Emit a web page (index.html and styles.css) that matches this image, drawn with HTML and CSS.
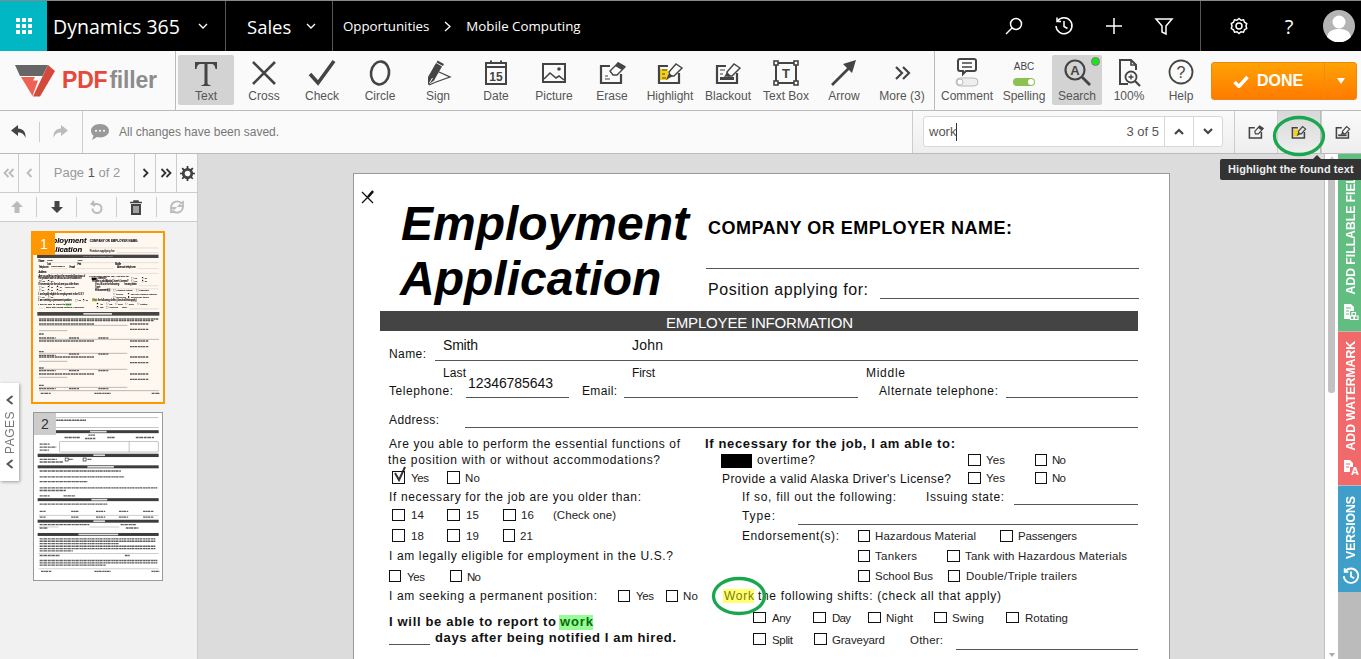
FILE: index.html
```html
<!DOCTYPE html>
<html lang="en">
<head>
  <meta charset="UTF-8" />
  <title>PDFfiller - Employment Application</title>
  <link rel="stylesheet" href="styles.css">
</head>
<body>

  <header class="topbar">
    <div class="waffle">
      <svg width="16" height="16" viewBox="0 0 16 16" fill="#fff">
        <rect x="0" y="0" width="4" height="4"/><rect x="6" y="0" width="4" height="4"/><rect x="12" y="0" width="4" height="4"/>
        <rect x="0" y="6" width="4" height="4"/><rect x="6" y="6" width="4" height="4"/><rect x="12" y="6" width="4" height="4"/>
        <rect x="0" y="12" width="4" height="4"/><rect x="6" y="12" width="4" height="4"/><rect x="12" y="12" width="4" height="4"/>
      </svg>
    </div>
    <div class="app-name">
      <span>Dynamics 365</span>
      <svg class="chev" width="10" height="6" viewBox="0 0 10 6"><path d="M1 1l4 4 4-4" /></svg>
    </div>
    <div class="module-name">
      <span>Sales</span>
      <svg class="chev" width="10" height="6" viewBox="0 0 10 6"><path d="M1 1l4 4 4-4" /></svg>
    </div>
    <nav class="crumbs">
      <span>Opportunities</span>
      <svg class="chev" width="7" height="11" viewBox="0 0 7 11"><path d="M1 1l5 4.5-5 4.5" /></svg>
      <span>Mobile Computing</span>
    </nav>
    <div class="top-actions">
      <svg width="20" height="20" viewBox="0 0 20 20" class="line"><circle cx="12" cy="8" r="5.5"/><path d="M8 12l-6 6"/></svg>
      <svg width="20" height="20" viewBox="0 0 20 20" class="line"><path d="M3.5 5A8 8 0 1 1 2 10"/><path d="M3 1.500V5.500h4"/><path d="M10 5v5.500l3.500 2"/></svg>
      <svg width="20" height="20" viewBox="0 0 20 20" class="line"><path d="M10 2v16M2 10h16"/></svg>
      <svg width="20" height="20" viewBox="0 0 20 20" class="line"><path d="M2 3h16l-6 7v8l-4-2v-6z"/></svg>
    </div>
    <div class="top-user">
      <svg width="18" height="18" viewBox="0 0 18 18" class="line"><circle cx="9" cy="9" r="3"/><path d="M9 1.500l2 1.700 2.500-.4 1 2.400 2.200 1.300-.7 2.500.7 2.500-2.200 1.300-1 2.400-2.500-.4-2 1.700-2-1.700-2.500.4-1-2.400-2.200-1.300.7-2.500-.7-2.500 2.200-1.300 1-2.400 2.500.4z"/></svg>
      <span class="help-mark">?</span>
      <svg class="avatar" width="32" height="32" viewBox="0 0 32 32"><circle cx="16" cy="16" r="16" fill="#b4b4b4"/><circle cx="16" cy="12" r="6.500" fill="#fff"/><path d="M4 27c1-6 6-8 12-8s11 2 12 8a16 16 0 0 1-24 0z" fill="#fff"/></svg>
    </div>
  </header>

  <section class="toolbar">
    <div class="logo">
      <svg width="42" height="32" viewBox="0 0 42 32">
        <path d="M0 0h33l-5.500 11H5z" fill="#666"/>
        <path d="M33 0l7 6-15 25.500h-7z" fill="#d24a3b"/>
        <path d="M6 12h14l-2 3.500 5 0-5.500 15.500z" fill="#ef6155"/>
      </svg>
      <span class="logo-pdf">PDF</span><span class="logo-filler">filler</span>
    </div>

    <div class="tools">
      <div class="tool active">
        <svg width="30" height="30" viewBox="0 0 30 30"><path d="M4 4h22v7h-1.500c-.3-3-1.500-5-4-5h-4v19c0 1.500 1 2 3 2v1h-9v-1c2 0 3-.5 3-2V6h-4c-2.500 0-3.700 2-4 5H4z" fill="#444"/></svg>
        <span>Text</span>
      </div>
      <div class="tool">
        <svg width="30" height="30" viewBox="0 0 30 30" class="ico"><path d="M4 4l22 22M26 4L4 26" stroke-width="2.600"/></svg>
        <span>Cross</span>
      </div>
      <div class="tool">
        <svg width="30" height="30" viewBox="0 0 30 30" class="ico"><path d="M3 16l8 9L27 3" stroke-width="3.600"/></svg>
        <span>Check</span>
      </div>
      <div class="tool">
        <svg width="30" height="30" viewBox="0 0 30 30" class="ico"><ellipse cx="15" cy="15" rx="9" ry="11.500" stroke-width="2.600" transform="rotate(8 15 15)"/></svg>
        <span>Circle</span>
      </div>
      <div class="tool">
        <svg width="30" height="30" viewBox="0 0 30 30" class="ico"><path d="M13 5l6 3.500-8 14-6 4.500 0-8z" fill="#444" stroke="none"/><path d="M14.500 2.500l6.500 3.500-1 2-6.500-3.500z" fill="#444" stroke="none"/><path d="M6.500 25l3-5" stroke="#fff" stroke-width="1"/><path d="M16 14l11 5-14 5-7 3" stroke-width="1.300"/></svg>
        <span>Sign</span>
      </div>
      <div class="tool">
        <svg width="30" height="30" viewBox="0 0 30 30" class="ico"><rect x="5" y="5" width="20" height="21" stroke-width="2"/><path d="M5 9h20M10 2.500V6M20 2.500V6" stroke-width="2"/><text x="15" y="23" class="glyph-date">15</text></svg>
        <span>Date</span>
      </div>
      <div class="tool">
        <svg width="30" height="30" viewBox="0 0 30 30" class="ico"><rect x="4" y="6" width="22" height="18" stroke-width="2"/><path d="M5 21l6-6 6 5 3-2 5 4" stroke-width="1.600"/><circle cx="20" cy="11" r="1.800" fill="#444" stroke="none"/></svg>
        <span>Picture</span>
      </div>
      <div class="tool">
        <svg width="30" height="30" viewBox="0 0 30 30" class="ico"><path d="M24 16v9H4V8h9" stroke-width="2.200"/><path d="M8 18h3M8 21h5" stroke-width="1.200"/><path d="M13 13l8-8 7 4-8 8h-4z" stroke-width="1.400"/><path d="M18 8l3-4 7 4-3 4z" fill="#444" stroke="none"/></svg>
        <span>Erase</span>
      </div>
      <div class="tool">
        <svg width="30" height="30" viewBox="0 0 30 30" class="ico"><rect x="5" y="11" width="8" height="11" fill="#f8d117" stroke="none"/><path d="M24 15v10H4V8h9" stroke-width="2.200"/><path d="M7 12h5M7 16h3M7 20h4" stroke-width="1.200"/><path d="M14 14l7-8 6 4-8 8h-4z" stroke-width="1.400"/><path d="M11 22l3-7 4 3z" fill="#444" stroke="none"/></svg>
        <span>Highlight</span>
      </div>
      <div class="tool">
        <svg width="30" height="30" viewBox="0 0 30 30" class="ico"><path d="M24 15v10H4V8h9" stroke-width="2.200"/><path d="M7 12h5M7 16h3" stroke-width="1.200"/><path d="M14 14l7-8 6 4-8 8h-4z" stroke-width="1.400"/><path d="M11 19l3-5 4 4z" fill="#444" stroke="none"/><rect x="7" y="19" width="14" height="3" fill="#444" stroke="none"/></svg>
        <span>Blackout</span>
      </div>
      <div class="tool">
        <svg width="30" height="30" viewBox="0 0 30 30" class="ico"><rect x="5" y="5" width="20" height="20" stroke-width="2"/><rect x="3" y="3" width="4" height="4" fill="#fff" stroke-width="1.600"/><rect x="23" y="3" width="4" height="4" fill="#fff" stroke-width="1.600"/><rect x="3" y="23" width="4" height="4" fill="#fff" stroke-width="1.600"/><rect x="23" y="23" width="4" height="4" fill="#fff" stroke-width="1.600"/><text x="15" y="20" class="glyph-box">T</text></svg>
        <span>Text Box</span>
      </div>
      <div class="tool">
        <svg width="30" height="30" viewBox="0 0 30 30" class="ico"><path d="M3 27L22 8" stroke-width="2.600"/><path d="M27 2l-13 4 9 9z" fill="#444" stroke="none"/></svg>
        <span>Arrow</span>
      </div>
      <div class="tool">
        <svg width="30" height="30" viewBox="0 0 30 30" class="ico"><path d="M9 9l6 6-6 6M16 9l6 6-6 6" stroke-width="2.200"/></svg>
        <span>More (3)</span>
      </div>
    </div>

    <div class="tools tools-right">
      <div class="tool">
        <svg width="30" height="30" viewBox="0 0 30 30">
          <path d="M8 1h14a2 2 0 0 1 2 2v8a2 2 0 0 1-2 2h-8l-3 3v-3H8a2 2 0 0 1-2-2V3a2 2 0 0 1 2-2z" fill="none" stroke="#444" stroke-width="2"/>
          <path d="M10 5h10M10 9h10" stroke="#444" stroke-width="1.500"/>
          <rect x="4" y="20" width="22" height="8" rx="4" fill="#eee" stroke="#bbb"/><circle cx="8" cy="24" r="3" fill="#fff" stroke="#bbb"/>
        </svg>
        <span>Comment</span>
      </div>
      <div class="tool">
        <svg width="30" height="30" viewBox="0 0 30 30">
          <text x="15" y="12" class="glyph-abc">ABC</text>
          <rect x="4" y="20" width="22" height="8" rx="4" fill="#8cc152"/><circle cx="22" cy="24" r="3" fill="#fff"/>
        </svg>
        <span>Spelling</span>
      </div>
      <div class="tool active tool-search">
        <svg width="30" height="30" viewBox="0 0 30 30" class="ico"><circle cx="13" cy="12" r="9.500" stroke-width="2.200"/><path d="M20 19l8 8" stroke-width="2.800"/><text x="13" y="17" class="glyph-a">A</text></svg>
        <span>Search</span>
        <i class="status-dot"></i>
      </div>
      <div class="tool">
        <svg width="30" height="30" viewBox="0 0 30 30" class="ico"><path d="M14 26H6V2h11l5 5v5" stroke-width="2"/><path d="M17 2v5h5" stroke-width="1.600"/><circle cx="17" cy="19" r="5.500" stroke-width="1.800"/><path d="M21 23l5 5" stroke-width="2.200"/><path d="M14.500 19h5M17 16.500v5" stroke-width="1.400"/></svg>
        <span>100%</span>
      </div>
      <div class="tool">
        <svg width="30" height="30" viewBox="0 0 30 30" class="ico"><circle cx="15" cy="14" r="11.500" stroke-width="1.800"/><text x="15" y="20" class="glyph-help">?</text></svg>
        <span>Help</span>
      </div>
    </div>

    <div class="done-btn">
      <div class="done-main">
        <svg width="16" height="13" viewBox="0 0 16 13"><path d="M1.500 7l4.500 4.500L14.500 2" fill="none" stroke="#fff" stroke-width="3.400"/></svg>
        <span>DONE</span>
      </div>
      <div class="done-caret"><i></i></div>
    </div>
  </section>

  <section class="subbar">
    <div class="history">
      <svg width="18" height="14" viewBox="0 0 18 14"><path d="M8 0L1 5.500 8 11V7.500c4 0 6 1.500 7.500 5.500C16 7 13 3.500 8 3.500z" fill="#444"/></svg>
      <i class="tiny-sep"></i>
      <svg width="18" height="14" viewBox="0 0 18 14"><path d="M10 0l7 5.500L10 11V7.500c-4 0-6 1.500-7.500 5.500C2 7 5 3.500 10 3.500z" fill="#bbb"/></svg>
    </div>
    <div class="saved">
      <svg width="20" height="18" viewBox="0 0 20 18"><path d="M10 1c5 0 9 2.900 9 6.700s-4 6.700-9 6.700c-1 0-2-.1-3-.4L2 17l1.500-4.300C2 11.500 1 9.700 1 7.700 1 3.900 5 1 10 1z" fill="#999"/><circle cx="6" cy="7.700" r="1" fill="#fff"/><circle cx="10" cy="7.700" r="1" fill="#fff"/><circle cx="14" cy="7.700" r="1" fill="#fff"/></svg>
      <span>All changes have been saved.</span>
    </div>
    <div class="find">
      <div class="find-box">
        <div class="find-input"><span class="find-term">work</span><span class="find-count">3 of 5</span></div>
        <div class="find-step"><svg width="10" height="7" viewBox="0 0 10 7"><path d="M1 6l4-4 4 4" /></svg></div>
        <div class="find-step"><svg width="10" height="7" viewBox="0 0 10 7"><path d="M1 1l4 4 4-4" /></svg></div>
      </div>
    </div>
    <div class="find-actions">
      <div class="find-action">
        <svg width="18" height="18" viewBox="0 0 30 30" class="ico"><path d="M24 15v10H4V8h9" stroke-width="2.600"/><path d="M13 14l8-9 6 4-8 9h-5z" stroke-width="2"/><path d="M18 8l3-3 6 4-3 3z" fill="#444" stroke="none"/></svg>
      </div>
      <div class="find-action on">
        <svg width="18" height="18" viewBox="0 0 30 30" class="ico"><rect x="6" y="11" width="9" height="11" fill="#f8d117" stroke="none"/><path d="M24 15v10H4V8h9" stroke-width="2.600"/><path d="M14 14l7-8 5 4-7 8h-4z" stroke-width="2"/><path d="M11 22l3-7 4 3z" fill="#444" stroke="none"/></svg>
      </div>
      <div class="find-action">
        <svg width="18" height="18" viewBox="0 0 30 30" class="ico"><path d="M24 15v10H4V8h9" stroke-width="2.600"/><path d="M14 14l7-8 5 4-7 8h-4z" stroke-width="2"/><path d="M11 19l3-5 4 4z" fill="#444" stroke="none"/><rect x="7" y="19" width="14" height="3" fill="#444" stroke="none"/></svg>
      </div>
    </div>
  </section>

  <main class="workspace">
    <aside class="sidebar">
      <div class="pager">
        <div class="pager-cell off"><svg width="12" height="10" viewBox="0 0 12 10"><path d="M5.500 1l-4 4 4 4M10.500 1l-4 4 4 4"/></svg></div>
        <div class="pager-cell off"><svg width="7" height="10" viewBox="0 0 7 10"><path d="M5.500 1l-4 4 4 4"/></svg></div>
        <div class="pager-cell page-label">Page <b>1</b> of 2</div>
        <div class="pager-cell"><svg width="7" height="10" viewBox="0 0 7 10"><path d="M1.500 1l4 4-4 4"/></svg></div>
        <div class="pager-cell"><svg width="12" height="10" viewBox="0 0 12 10"><path d="M1.500 1l4 4-4 4M6.500 1l4 4-4 4"/></svg></div>
        <div class="pager-cell"><svg width="15" height="15" viewBox="0 0 16 16"><circle cx="8" cy="8" r="4.500" fill="none" stroke="#444" stroke-width="3"/><path d="M8 0v16M0 8h16M2.300 2.300l11.400 11.400M13.700 2.300L2.300 13.700" stroke="#444" stroke-width="2.400" stroke-dasharray="3 10 3"/></svg></div>
      </div>
      <div class="page-tools">
        <svg width="14" height="14" viewBox="0 0 14 14"><path d="M7 1l6 6H9.500v6h-5V7H1z" fill="#bbb"/></svg>
        <i class="tiny-sep"></i>
        <svg width="14" height="14" viewBox="0 0 14 14"><path d="M7 13l6-6H9.500V1h-5v6H1z" fill="#444"/></svg>
        <i class="tiny-sep"></i>
        <svg width="14" height="14" viewBox="0 0 14 14"><path d="M4 1L1.500 4 5 6M2 4h5a4.500 4.500 0 1 1-4.500 4.500" fill="none" stroke="#bbb" stroke-width="2"/></svg>
        <i class="tiny-sep"></i>
        <svg width="14" height="15" viewBox="0 0 14 15"><path d="M1 2.500h12M5 2.500V1h4v1.500" stroke="#444" stroke-width="1.500" fill="none"/><path d="M2 4h10v11H2z" fill="#444"/><path d="M5 6v7M7 6v7M9 6v7" stroke="#fff"/></svg>
        <i class="tiny-sep"></i>
        <svg width="16" height="14" viewBox="0 0 16 14"><path d="M2 7a6 6 0 0 1 10-4l2-1v4h-4l1.500-1.500M14 7a6 6 0 0 1-10 4l-2 1V8h4l-1.500 1.500" fill="none" stroke="#bbb" stroke-width="1.800"/></svg>
      </div>
      <div class="thumbs">
        <div class="thumb current">
          <svg width="130" height="169" viewBox="99 249 390 507">
            <use href="#form" transform="translate(99 249) scale(.48) translate(-354 -175)"/>
            <rect x="112" y="486" width="366" height="11" fill="#444"/>
            <rect x="250" y="489" width="86" height="5" fill="#ddd"/>
            <g class="rows">
              <path d="M117 507h360M117 512h345"/>
              <path d="M117 522h165M390 522h55" />
              <path d="M117 552h15M117 564h50M207 564h30M295 564h30M390 538h55"/>
              <path d="M117 573h165M390 573h55"/>
              <path d="M117 605h15M117 616h50M207 612h30M295 612h30M390 590h55"/>
              <path d="M117 621h165M390 621h55"/>
              <path d="M117 654h15M117 662h50M207 662h30M295 662h30M390 638h55"/>
              <path d="M117 672h165M390 672h55"/>
              <path d="M117 706h15M117 716h50M207 716h30M295 716h30M390 688h55"/>
              <path d="M122 730h30M283 730h50M455 730h25"/>
            </g>
            <path d="M117 526h265M117 542h85M117 568h360M117 610h265M117 634h85M117 658h265M117 682h85M117 712h265M117 722h360" stroke="#777" stroke-width="1.500"/>
          </svg>
          <span class="thumb-no">1</span>
        </div>
        <div class="thumb">
          <svg width="128" height="167" viewBox="101 39 386 502">
            <path d="M160 52h316M115 82h362M180 124h295M180 156h295M178 124v32M388 124v32M476 124v32" stroke="#888" stroke-width="1.500"/>
            <g fill="#3d3d3d">
              <rect x="112" y="90" width="365" height="9"/><rect x="112" y="161" width="365" height="10"/><rect x="112" y="196" width="365" height="9"/>
              <rect x="112" y="295" width="365" height="9"/><rect x="112" y="360" width="365" height="9"/><rect x="112" y="400" width="365" height="9"/>
            </g>
            <g fill="#ddd">
              <rect x="270" y="92" width="50" height="5"/><rect x="280" y="163" width="35" height="5"/><rect x="262" y="198" width="80" height="5"/>
              <rect x="274" y="297" width="48" height="5"/><rect x="280" y="362" width="35" height="5"/><rect x="235" y="402" width="120" height="5"/>
            </g>
            <g class="rows">
              <path d="M168 60h90M193 112h47M265 105h20M255 115h32M322 112h24M408 112h56"/>
              <path d="M118 132h30M118 141h50M118 150h28"/>
              <path d="M118 178h52M118 186h70M205 178h14M262 178h12"/>
              <path d="M118 213h245M118 231h255M118 245h145M118 264h355M118 272h80M118 288h30M190 288h35"/>
              <path d="M118 313h205M118 335h18M213 335h22M288 335h28M357 335h28M430 335h32M118 352h18M213 352h22M288 352h28M357 352h28M430 352h32"/>
              <path d="M118 375h150M362 375h48M118 385h25M378 385h38"/>
              <path d="M118 418h350M118 425h350M118 432h240M118 440h350M118 447h350M118 454h100"/>
              <path d="M118 468h60M375 468h15M118 483h355M118 490h355M118 497h200M122 516h32M283 516h50M455 516h25"/>
            </g>
            <path d="M115 347h362M115 382h60M268 382h90M115 462h362M115 508h362" stroke="#999" stroke-width="1.500"/>
            <rect x="195" y="174" width="9" height="9" fill="none" stroke="#222" stroke-width="2"/>
            <rect x="249" y="174" width="9" height="9" fill="none" stroke="#222" stroke-width="2"/>
          </svg>
          <span class="thumb-no">2</span>
        </div>
      </div>
    </aside>

    <div class="pages-tab">
      <svg width="8" height="10" viewBox="0 0 8 10"><path d="M6.500 1l-5 4 5 4"/></svg>
      <span>PAGES</span>
      <svg width="8" height="10" viewBox="0 0 8 10"><path d="M6.500 1l-5 4 5 4"/></svg>
    </div>

    <div class="viewer">
      <div class="sheet">
        <svg class="form-svg" width="815" height="485" viewBox="354 174 815 485">
          <g id="form">
            <path d="M362 192l11 11M373 192l-11 11" stroke="#111" stroke-width="1.300" fill="none"/>
            <path d="M368 197l5-6" stroke="#111" stroke-width="2.500"/>

            <text x="401" y="240" class="title">Employment</text>
            <text x="400" y="295" class="title">Application</text>
            <text x="708" y="234" class="company" textLength="304">COMPANY OR EMPLOYER NAME:</text>
            <path class="rule" d="M706 268.500h433M880 298.500h259M435 360.500h703M466 397.500h103M624 397.500h234M1006 397.500h132M465 427.500h673M1014 504.500h124M798 524.500h340M956 649.500h182M389 644.500h41"/>
            <text x="708" y="295" class="position" textLength="160">Position applying for:</text>

            <rect x="380" y="311" width="758" height="20" fill="#444"/>
            <text x="666" y="328" class="band" textLength="187">EMPLOYEE INFORMATION</text>

            <text x="389" y="358" textLength="37">Name:</text>
            <text x="443" y="350" class="fill" textLength="35">Smith</text>
            <text x="632" y="350" class="fill" textLength="31">John</text>
            <text x="443" y="377" textLength="23">Last</text>
            <text x="632" y="377" textLength="23">First</text>
            <text x="866" y="377" textLength="39">Middle</text>
            <text x="389" y="395" textLength="64">Telephone:</text>
            <text x="468" y="388" class="fill" textLength="85">12346785643</text>
            <text x="582" y="395" textLength="35">Email:</text>
            <text x="879" y="395" textLength="119">Alternate telephone:</text>
            <text x="389" y="424" textLength="50">Address:</text>

            <text x="389" y="448" textLength="291">Are you able to perform the essential functions of</text>
            <text x="388" y="464" textLength="272">the position with or without accommodations?</text>
            <text x="411" y="482" class="opt" textLength="18">Yes</text>
            <text x="465" y="482" class="opt" textLength="15">No</text>
            <path d="M395 473l4 7 6-13" stroke="#333" stroke-width="2" fill="none"/>
            <text x="389" y="501" textLength="252">If necessary for the job are you older than:</text>
            <text x="411" y="519" class="opt">14</text><text x="466" y="519" class="opt">15</text><text x="521" y="519" class="opt">16</text>
            <text x="553" y="519" class="opt" textLength="63">(Check one)</text>
            <text x="411" y="540" class="opt">18</text><text x="466" y="540" class="opt">19</text><text x="520" y="540" class="opt">21</text>
            <text x="389" y="560" textLength="284">I am legally eligible for employment in the U.S.?</text>
            <text x="407" y="581" class="opt" textLength="18">Yes</text>
            <text x="467" y="581" class="opt" textLength="14">No</text>
            <text x="389" y="600" textLength="208">I am seeking a permanent position:</text>
            <text x="636" y="600" class="opt" textLength="18">Yes</text>
            <text x="683" y="600" class="opt" textLength="15">No</text>

            <rect x="723" y="589" width="31" height="14" fill="#ffff70"/>
            <text x="724" y="600" class="found" textLength="30">Work</text>
            <text x="758" y="600" textLength="243">the following shifts: (check all that apply)</text>

            <text x="389" y="626" class="strong" textLength="167">I will be able to report to</text>
            <rect x="559" y="615" width="34" height="15" fill="#97fb97"/>
            <text x="560" y="626" class="strong hit" textLength="33">work</text>
            <text x="435" y="642" class="strong" textLength="241">days after being notified I am hired.</text>

            <text x="705" y="448" class="strong" textLength="250">If necessary for the job, I am able to:</text>
            <rect x="721" y="454" width="31" height="14" fill="#000"/>
            <text x="757" y="464" textLength="58">overtime?</text>
            <text x="986" y="464" class="opt" textLength="19">Yes</text>
            <text x="1052" y="464" class="opt" textLength="14">No</text>
            <text x="722" y="483" textLength="229">Provide a valid Alaska Driver's License?</text>
            <text x="986" y="482" class="opt" textLength="19">Yes</text>
            <text x="1052" y="482" class="opt" textLength="14">No</text>
            <text x="742" y="501" textLength="154">If so, fill out the following:</text>
            <text x="926" y="501" textLength="78">Issuing state:</text>
            <text x="742" y="520" textLength="33">Type:</text>
            <text x="742" y="540" textLength="97">Endorsement(s):</text>
            <text x="875" y="540" class="opt" textLength="101">Hazardous Material</text>
            <text x="1018" y="540" class="opt" textLength="59">Passengers</text>
            <text x="875" y="560" class="opt" textLength="42">Tankers</text>
            <text x="965" y="560" class="opt" textLength="162">Tank with Hazardous Materials</text>
            <text x="875" y="580" class="opt" textLength="58">School Bus</text>
            <text x="966" y="580" class="opt" textLength="111">Double/Triple trailers</text>
            <text x="772" y="622" class="opt" textLength="19">Any</text>
            <text x="832" y="622" class="opt" textLength="19">Day</text>
            <text x="886" y="622" class="opt" textLength="27">Night</text>
            <text x="952" y="622" class="opt" textLength="32">Swing</text>
            <text x="1025" y="622" class="opt" textLength="43">Rotating</text>
            <text x="772" y="644" class="opt" textLength="21">Split</text>
            <text x="832" y="644" class="opt" textLength="53">Graveyard</text>
            <text x="910" y="644" class="opt" textLength="33">Other:</text>

            <g class="boxes">
              <rect x="392.500" y="471.500" width="12" height="12"/><rect x="447.500" y="471.500" width="12" height="12"/>
              <rect x="392.500" y="509.500" width="12" height="11"/><rect x="447.500" y="509.500" width="12" height="11"/><rect x="503.500" y="509.500" width="12" height="11"/>
              <rect x="392.500" y="529.500" width="12" height="12"/><rect x="447.500" y="529.500" width="12" height="12"/><rect x="503.500" y="529.500" width="11" height="12"/>
              <rect x="389.500" y="570.500" width="11" height="11"/><rect x="450.500" y="570.500" width="11" height="11"/>
              <rect x="618.500" y="590.500" width="11" height="11"/><rect x="666.500" y="590.500" width="11" height="11"/>
              <rect x="968.500" y="454.500" width="12" height="11"/><rect x="1035.500" y="454.500" width="11" height="11"/>
              <rect x="968.500" y="472.500" width="12" height="11"/><rect x="1035.500" y="472.500" width="11" height="11"/>
              <rect x="858.500" y="530.500" width="11" height="11"/><rect x="1000.500" y="530.500" width="12" height="11"/>
              <rect x="858.500" y="550.500" width="11" height="11"/><rect x="947.500" y="550.500" width="12" height="11"/>
              <rect x="858.500" y="570.500" width="11" height="11"/><rect x="948.500" y="570.500" width="11" height="11"/>
              <rect x="753.500" y="612.500" width="12" height="10"/><rect x="813.500" y="612.500" width="12" height="10"/><rect x="868.500" y="612.500" width="12" height="10"/><rect x="934.500" y="612.500" width="12" height="10"/><rect x="1006.500" y="612.500" width="12" height="10"/>
              <rect x="753.500" y="633.500" width="12" height="11"/><rect x="814.500" y="633.500" width="12" height="11"/>
            </g>
          </g>
        </svg>
      </div>
    </div>

    <div class="scrollbar">
      <div class="scroll-up"></div>
      <div class="scroll-thumb"></div>
      <div class="scroll-down"></div>
    </div>

    <div class="side-tabs">
      <div class="side-tab tab-fields">
        <span>ADD FILLABLE FIELDS</span>
        <svg width="16" height="18" viewBox="0 0 16 18" class="tab-ico"><path d="M1 1h7l3 3v4H7v8H1z" fill="#fff"/><path d="M3 5h5M3 8h3M3 11h3" stroke="#62bd80"/><path d="M9 9.500h3.500v3H9zM7.500 13H11v3.500H7.500zM11.500 13H15v3.500h-3.500z" fill="none" stroke="#fff" stroke-width="1.200"/></svg>
      </div>
      <div class="side-tab tab-watermark">
        <span>ADD WATERMARK</span>
        <svg width="16" height="16" viewBox="0 0 16 16" class="tab-ico"><path d="M1 1h6l3 3v4H7v5H1z" fill="#fff"/><path d="M3 5h4M3 8h3" stroke="#f1696b"/><text x="8" y="15.500" class="glyph-tab">A</text></svg>
      </div>
      <div class="side-tab tab-versions">
        <span>VERSIONS</span>
        <svg width="18" height="18" viewBox="0 0 20 20" class="tab-ico"><path d="M3.500 5A8 8 0 1 1 2 10" fill="none" stroke="#fff" stroke-width="2"/><path d="M3 1.500V5.500h4" fill="none" stroke="#fff" stroke-width="2"/><path d="M10 5v5.500l3.500 2" fill="none" stroke="#fff" stroke-width="2"/></svg>
      </div>
    </div>
  </main>

  <div class="tooltip">Highlight the found text</div>

  <svg class="marks" width="1361" height="659" viewBox="0 0 1361 659">
    <ellipse cx="1299" cy="136" rx="24.500" ry="18.500"/>
    <ellipse cx="739" cy="596" rx="25.500" ry="17.500"/>
  </svg>

</body>
</html>
```

FILE: styles.css
```css
html, body {
  margin: 0;
  padding: 0;
  height: 100%;
  overflow: hidden;
}

body {
  font-family: "Liberation Sans", Arial, sans-serif;
  color: #444;
  background: #dcdcdc;
  position: relative;
}

/* top black bar */
.topbar {
  display: flex;
  height: 50px;
  background: #000;
  border-top: 1px solid #888;
  color: #fff;
  font-family: "Open Sans", sans-serif;
}

.waffle {
  width: 47px;
  background: #00b7c3;
  display: flex;
  align-items: center;
  justify-content: center;
}

.app-name, .module-name {
  display: flex;
  align-items: center;
  border-left: 1px solid #000;
  box-sizing: border-box;
  border-right: 1px solid #555;
}

.app-name {
  width: 179px;
  padding-left: 5px;
  gap: 18px;
  font-size: 19.500px;
}

.module-name {
  width: 107px;
  padding-left: 20px;
  gap: 15px;
  font-size: 18.500px;
}

.chev path {
  fill: none;
  stroke: #fff;
  stroke-width: 1.300;
}

.crumbs {
  display: flex;
  align-items: center;
  gap: 15px;
  padding-left: 10px;
  font-size: 13.300px;
}

.top-actions {
  margin-left: auto;
  width: 170px;
  display: flex;
  align-items: center;
  justify-content: space-between;
  padding-right: 26px;
}

.top-user {
  width: 161px;
  flex: none;
  box-sizing: border-box;
  border-left: 1px solid #555;
  display: flex;
  align-items: center;
  padding-left: 29px;
}

.line {
  fill: none;
  stroke: #fff;
  stroke-width: 1.500;
  flex: none;
}

.help-mark {
  font-size: 20px;
  width: 20px;
  margin-left: 31px;
  text-align: center;
}

.avatar {
  margin-left: 24px;
  flex: none;
}

/* tool ribbon */
.toolbar {
  display: flex;
  height: 59px;
  background: #fafafa;
  border-bottom: 1px solid #bbb;
}

.logo {
  width: 176px;
  flex: none;
  box-sizing: border-box;
  display: flex;
  align-items: center;
  padding-left: 15px;
  border-right: 1px solid #bbb;
  font-weight: bold;
  font-size: 23px;
  letter-spacing: -0.2px;
}

.logo svg {
  margin-right: 5px;
}

.logo-pdf {
  color: #e5493a;
  margin-right: 2px;
}

.logo-filler {
  color: #8c8c8c;
}

.tools {
  display: flex;
  flex: none;
  padding-left: 1px;
  width: 759px;
  box-sizing: border-box;
  border-right: 1px solid #bbb;
}

.tools-right {
  width: 276px;
  padding-left: 0;
  border-right: none;
}

.tool {
  width: 56px;
  height: 50px;
  margin: 4px 1px 0;
  border-radius: 2px;
  display: flex;
  flex-direction: column;
  align-items: center;
  font-size: 12px;
  color: #555;
  position: relative;
  padding-top: 3px;
  box-sizing: border-box;
  flex: none;
}

.tool span {
  white-space: nowrap;
  margin-top: 1px;
}

.tools-right .tool {
  margin: 4px 0 0;
}

.tools-right .tool:nth-child(1) { width: 64px; }
.tools-right .tool:nth-child(2) { width: 50px; }
.tools-right .tool:nth-child(3) { width: 50px; margin-left: 3px; }
.tools-right .tool:nth-child(4) { width: 54px; }
.tools-right .tool:nth-child(5) { width: 50px; }

.tool.active {
  background: #d3d3d3;
}

.tool > svg {
  flex: none;
}

.ico {
  fill: none;
  stroke: #444;
}

.status-dot {
  position: absolute;
  top: 2px;
  right: 2px;
  width: 7px;
  height: 7px;
  border-radius: 50%;
  background: #1be41b;
  border: 1px solid #7a7a7a;
}

.glyph-date, .glyph-box, .glyph-a, .glyph-help, .glyph-abc {
  font-weight: bold;
  fill: #444;
  stroke: none;
  text-anchor: middle;
}

.glyph-date { font-size: 12px; }
.glyph-box { font-size: 13px; }
.glyph-a { font-size: 13px; }
.glyph-help { font-size: 16px; font-weight: normal; }
.glyph-abc { font-size: 10px; font-weight: normal; }

.done-btn {
  width: 146px;
  height: 38px;
  margin-top: 11px;
  flex: none;
  display: flex;
  border-radius: 3px;
  background: linear-gradient(#ffa203, #ff7a00);
  color: #fff;
  border: 1px solid #e88a10;
  box-sizing: border-box;
}

.done-main {
  flex: 1;
  display: flex;
  align-items: center;
  justify-content: center;
  gap: 8px;
  font-weight: bold;
  font-size: 16px;
  border-right: 1px solid #ee8b12;
}

.done-caret {
  width: 31px;
  display: flex;
  align-items: center;
  justify-content: center;
}

.done-caret i {
  border-left: 4px solid transparent;
  border-right: 4px solid transparent;
  border-top: 6px solid #fff;
}

/* second row */
.subbar {
  display: flex;
  height: 42px;
  background: #fafafa;
  border-bottom: 1px solid #bbb;
}

.history {
  width: 83px;
  flex: none;
  box-sizing: border-box;
  border-right: 1px solid #ccc;
  display: flex;
  align-items: center;
  justify-content: space-between;
  padding: 0 13px 0 10px;
}

.tiny-sep {
  width: 1px;
  height: 20px;
  background: #ccc;
  display: block;
}

.saved {
  display: flex;
  flex: none;
  align-items: center;
  gap: 9px;
  padding-left: 7px;
  width: 829px;
  box-sizing: border-box;
  font-size: 12px;
  color: #777;
}

.find {
  width: 322px;
  flex: none;
  box-sizing: border-box;
  padding: 5px 11px 5px 10px;
  border-left: 1px solid #ccc;
  background: linear-gradient(#fafafa, #eee);
}

.find-box {
  display: flex;
  height: 31px;
  box-sizing: border-box;
  border: 1px solid #d8d8d8;
  border-radius: 3px;
  background: #fff;
}

.find-input {
  flex: 1;
  display: flex;
  justify-content: space-between;
  align-items: center;
  padding: 0 5px;
  font-size: 13px;
  color: #555;
}

.find-term {
  border-right: 1px solid #333;
  height: 18px;
  line-height: 18px;
}

.find-step {
  width: 28px;
  border-left: 1px solid #d8d8d8;
  display: flex;
  align-items: center;
  justify-content: center;
}

.find-step path {
  fill: none;
  stroke: #444;
  stroke-width: 2.200;
}

.find-actions {
  flex: 1;
  display: flex;
  background: linear-gradient(#fafafa, #eee);
}

.find-action {
  width: 43px;
  flex: none;
  box-sizing: border-box;
  display: flex;
  align-items: center;
  justify-content: center;
  border-left: 1px solid #ccc;
}

.find-action.on {
  width: 44px;
  background: linear-gradient(#d8d8d8, #eee);
  border-right: 1px solid #bbb;
}

/* main area */
.workspace {
  display: flex;
  height: 505px;
  position: relative;
  overflow: hidden;
}

.sidebar {
  width: 198px;
  flex: none;
  box-sizing: border-box;
  background: #f1f1f1;
  border-right: 1px solid #ccc;
}

.pager {
  display: grid;
  grid-template-columns: 19px 21px 95px 21px 21px 1fr;
  height: 39px;
  background: #fafafa;
  border-bottom: 1px solid #ccc;
  box-sizing: border-box;
}

.pager-cell {
  display: flex;
  align-items: center;
  justify-content: center;
  border-right: 1px solid #ccc;
}

.pager-cell:last-child {
  border-right: none;
}

.pager-cell path {
  fill: none;
  stroke: #333;
  stroke-width: 1.800;
}

.pager-cell.off path {
  stroke: #bbb;
}

.page-label {
  font-size: 13px;
  color: #999;
  display: block;
  line-height: 38px;
  text-align: center;
}

.page-label b {
  color: #555;
  font-weight: normal;
}

.page-tools {
  display: flex;
  align-items: center;
  justify-content: space-between;
  height: 29px;
  padding: 0 12px 0 10px;
  background: #fafafa;
  border-bottom: 1px solid #ccc;
  box-sizing: border-box;
}

.thumbs {
  padding-top: 9px;
  display: flex;
  flex-direction: column;
  align-items: center;
  gap: 8px;
}

.thumb {
  position: relative;
  line-height: 0;
  background: #fff;
  border: 1px solid #999;
  margin-right: 1px;
}

.thumb svg {
  filter: blur(0.3px);
}

.thumb use {
  stroke: #111;
  stroke-width: 0.5;
}

.thumb.current {
  border: 2px solid #ff9800;
  background: #fff8f1;
}

.thumb-no {
  position: absolute;
  top: 0;
  left: 0;
  width: 22px;
  height: 22px;
  background: #ccc;
  color: #333;
  font-size: 14px;
  line-height: 22px;
  text-align: center;
}

.thumb.current .thumb-no {
  background: #ff9800;
  color: #fff;
}

.rows path {
  fill: none;
  stroke: #333;
  stroke-width: 4;
  stroke-dasharray: 7 1 4 1 9 2;
  opacity: 0.8;
}

.pages-tab {
  position: absolute;
  left: 0;
  top: 229px;
  width: 19px;
  height: 98px;
  background: #fff;
  box-shadow: 1px 1px 3px rgba(0,0,0,0.35);
  display: flex;
  flex-direction: column;
  align-items: center;
  justify-content: space-between;
  padding: 12px 0;
  box-sizing: border-box;
}

.pages-tab path {
  fill: none;
  stroke: #555;
  stroke-width: 2;
}

.pages-tab span {
  writing-mode: vertical-rl;
  transform: rotate(180deg);
  font-size: 12px;
  color: #777;
  letter-spacing: 0.5px;
}

.viewer {
  flex: 1;
  background: #dcdcdc;
  padding: 19px 0 0 155px;
  border-right: 1px solid #c0c0c0;
  overflow: hidden;
}

.sheet {
  width: 815px;
  height: 500px;
  background: #fff;
  border: 1px solid #999;
  line-height: 0;
}

.form-svg {
  font-size: 12px;
  fill: #111;
}

.form-svg text {
  white-space: pre;
}

.title {
  font-size: 48px;
  font-weight: bold;
  font-style: italic;
  fill: #000;
}

.company {
  font-size: 18px;
  font-weight: bold;
  fill: #000;
}

.position {
  font-size: 16px;
}

.band {
  font-size: 15px;
  fill: #fff;
}

.fill {
  font-size: 14px;
}

.opt {
  font-size: 11.500px;
  fill: #222;
}

.found {
  fill: #7c7c10;
}

.strong {
  font-size: 13px;
  font-weight: bold;
}

.hit {
  fill: #0a6a0a;
}

.rule {
  fill: none;
  stroke: #555;
  stroke-width: 1;
}

.boxes rect {
  fill: none;
  stroke: #111;
  stroke-width: 1;
}

.scrollbar {
  width: 13px;
  flex: none;
  background: #fff;
  padding: 0 3px;
  box-sizing: border-box;
  display: flex;
  flex-direction: column;
}

.scroll-up, .scroll-down {
  align-self: center;
  border-left: 3.500px solid transparent;
  border-right: 3.500px solid transparent;
}

.scroll-up {
  border-bottom: 4px solid #ccc;
  margin: 2px 0;
}

.scroll-down {
  border-top: 4px solid #aaa;
  margin: auto 0 2px;
}

.scroll-thumb {
  width: 7px;
  height: 231px;
  background: #c2c2c2;
  border-radius: 0 0 3px 3px;
}

.side-tabs {
  width: 23px;
  flex: none;
  background: #bbb;
  display: flex;
  flex-direction: column;
  gap: 1px;
  color: #fff;
}

.side-tab {
  display: flex;
  flex-direction: column;
  align-items: center;
  justify-content: flex-end;
  overflow: hidden;
  box-sizing: border-box;
  gap: 9px;
  flex: none;
  padding-left: 2px;
}

.side-tab span {
  writing-mode: vertical-rl;
  transform: rotate(180deg);
  font-size: 12.200px;
  font-weight: bold;
  white-space: nowrap;
  flex: none;
}

.tab-ico {
  flex: none;
}

.tab-fields {
  height: 177px;
  background: #62bd80;
  padding-bottom: 10px;
}

.tab-watermark {
  height: 153px;
  background: #f1696b;
  padding-bottom: 10px;
}

.tab-versions {
  height: 106px;
  background: #3f9fc9;
  padding-bottom: 7px;
}

.tab-versions span {
  margin-bottom: -1px;
}

.glyph-tab {
  font-size: 11px;
  font-weight: bold;
  fill: #fff;
}

/* overlays */
.tooltip {
  position: absolute;
  left: 1220px;
  top: 159px;
  width: 141px;
  height: 21px;
  box-sizing: border-box;
  background: #333;
  border-radius: 2px 0 0 2px;
  color: #eee;
  font-size: 11px;
  font-weight: bold;
  line-height: 21px;
  padding-left: 8px;
  white-space: nowrap;
  letter-spacing: 0.1px;
}

.tooltip::before {
  content: "";
  position: absolute;
  top: -4px;
  left: 93px;
  border-left: 4px solid transparent;
  border-right: 4px solid transparent;
  border-bottom: 4px solid #333;
}

.marks {
  position: absolute;
  left: 0;
  top: 0;
  pointer-events: none;
}

.marks ellipse {
  fill: none;
  stroke: #1aa64f;
  stroke-width: 3.300;
}
```
